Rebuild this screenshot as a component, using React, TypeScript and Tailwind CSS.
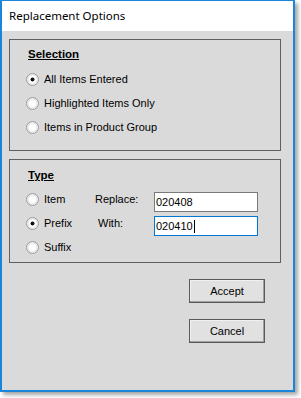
import React from 'react';

const ui = { fontFamily: '"Liberation Sans", Arial, sans-serif' };

function Radio({ checked }: { checked?: boolean }) {
  return (
    <svg width="13" height="13" viewBox="0 0 13 13" className="shrink-0">
      <circle cx="6.5" cy="6.5" r="6" fill="#f4f4f4" stroke="#9a9a9a" />
      <circle cx="6.5" cy="6.5" r="4.6" fill="#ffffff" stroke="#dcdcdc" />
      {checked && <circle cx="6.5" cy="6.5" r="2" fill="#111111" />}
    </svg>
  );
}

function RadioRow({ label, checked, width }: { label: string; checked?: boolean; width?: string }) {
  return (
    <div className={`flex items-center gap-[5px] h-[24px] ${width ?? ''}`}>
      <Radio checked={checked} />
      <span className="text-[11px] text-black leading-none">{label}</span>
    </div>
  );
}

export default function App() {
  return (
    <div className="w-[301px] h-[398px] bg-white" style={ui}>
      <div className="w-[295px] h-[392px] flex flex-col border-x-2 border-b-2 border-t border-[#1a86d9] shadow-[3px_3px_4px_rgba(0,0,0,0.35)]">
        <div className="h-[30px] bg-white flex items-center pl-[7px] shrink-0">
          <span className="text-[11.5px] text-black" style={{ fontFamily: '"Noto Sans", "Open Sans", sans-serif' }}>
            Replacement Options
          </span>
        </div>

        <div className="flex-1 bg-[#dadada] flex flex-col pl-[7px] pr-[12px] pt-[8px]">
          {/* Selection */}
          <div className="h-[112px] border border-[#5f5f5f] pt-[8px] pl-[16px]">
            <div className="ml-[2px] h-[14px] flex items-center">
              <span className="text-[11.5px] font-bold underline leading-none">Selection</span>
            </div>
            <div className="mt-[5px] flex flex-col">
              <RadioRow label="All Items Entered" checked />
              <RadioRow label="Highlighted Items Only" />
              <RadioRow label="Items in Product Group" />
            </div>
          </div>

          {/* Type */}
          <div className="mt-[8px] h-[104px] border border-[#5f5f5f] pt-[9px] pl-[16px]">
            <div className="ml-[2px] h-[14px] flex items-center">
              <span className="text-[11.5px] font-bold underline leading-none">Type</span>
            </div>
            <div className="mt-[4px] flex flex-col">
              <div className="flex h-[24px]">
                <RadioRow label="Item" width="w-[69px]" />
                <span className="w-[59px] self-center text-[11px] leading-none">Replace:</span>
                <div className="mt-[5px] w-[104px] h-[20px] bg-white border border-[#7a7a7a] flex items-center pl-[1px] text-[11px]">
                  020408
                </div>
              </div>
              <div className="flex h-[24px]">
                <RadioRow label="Prefix" checked width="w-[72px]" />
                <span className="w-[56px] self-center text-[11px] leading-none">With:</span>
                <div className="mt-[5px] w-[104px] h-[20px] bg-white border border-[#0078d7] flex items-center pl-[1px] text-[11px]">
                  020410
                  <span className="w-px h-[13px] bg-black ml-[1px]" />
                </div>
              </div>
              <RadioRow label="Suffix" />
            </div>
          </div>

          {/* Buttons */}
          <div className="self-end mr-[16px] mt-[16px] flex flex-col gap-[16px]">
            <button className="w-[76px] h-[24px] bg-[#e1e1e1] border border-[#5a5a5a] shadow-[inset_-1px_-1px_0_#a0a0a0,inset_1px_1px_0_#f0f0f0] text-[11px] text-black">
              Accept
            </button>
            <button className="w-[76px] h-[24px] bg-[#e1e1e1] border border-[#5a5a5a] shadow-[inset_-1px_-1px_0_#a0a0a0,inset_1px_1px_0_#f0f0f0] text-[11px] text-black">
              Cancel
            </button>
          </div>
        </div>
      </div>
    </div>
  );
}
